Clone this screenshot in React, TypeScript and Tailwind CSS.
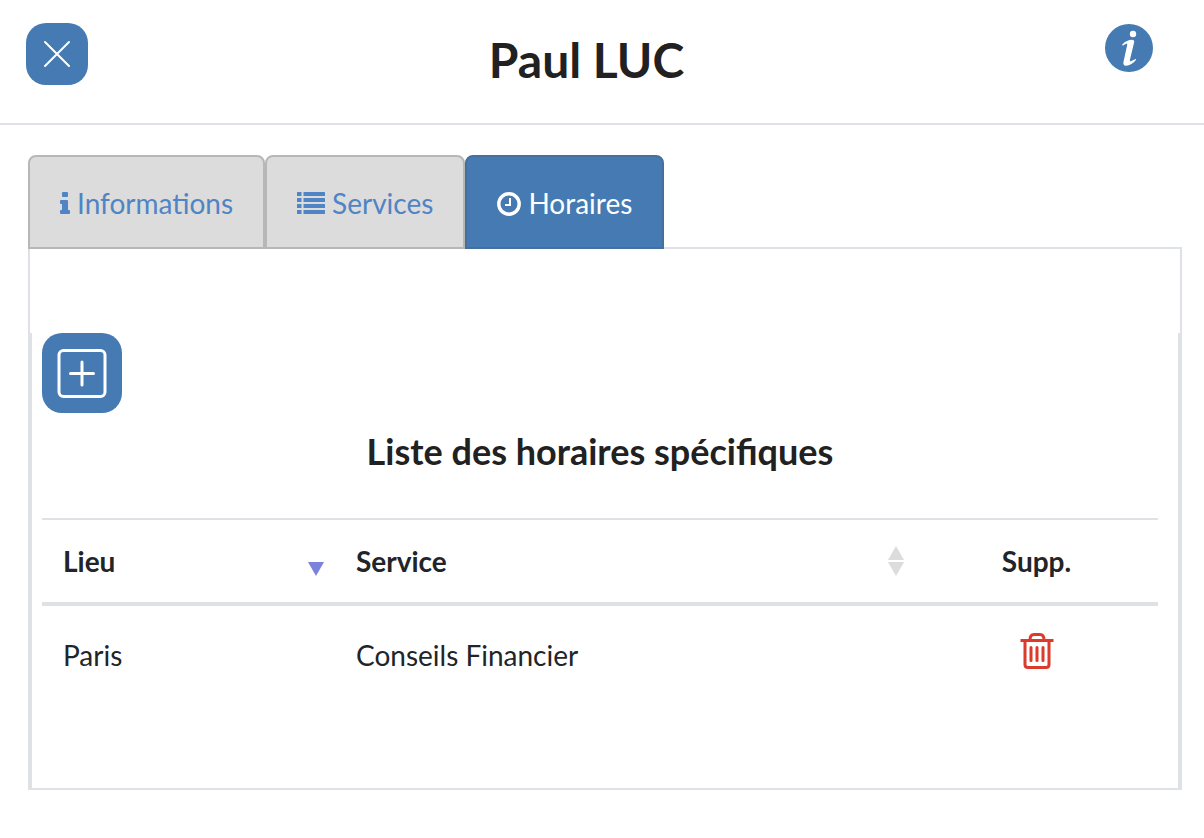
import { useState } from "react";
import type { ReactNode } from "react";

type TabId = "informations" | "services" | "horaires";

interface Horaire {
  id: number;
  lieu: string;
  service: string;
}

const horairesInit: Horaire[] = [{ id: 1, lieu: "Paris", service: "Conseils Financier" }];

function CloseIcon() {
  return (
    <svg className="h-7 w-7" viewBox="0 0 28 28" fill="none" stroke="currentColor" strokeWidth={2} strokeLinecap="round" aria-hidden="true">
      <path d="M2 2l24 24M26 2L2 26" />
    </svg>
  );
}

function HelpIcon() {
  return (
    <svg className="h-[50px] w-12" viewBox="0 0 48 48" aria-hidden="true">
      <circle cx="24" cy="24" r="24" fill="#457ab2" />
      <circle cx="28" cy="10" r="3.2" fill="white" />
      <path
        d="M17.3 20.6C20.5 17 24.5 15.6 27.7 15.9C29.4 16 29.4 17.3 29.1 18.5L25 35.4C24.7 37.1 25.1 37.5 26.2 37L30.2 35.2C31.1 34.9 31.4 35.4 30.9 36C28.5 39.2 24.5 41.6 21.2 41.8C18.6 41.9 18 39.9 18.5 37.8L22.2 21.1C22.4 19.7 21.9 19.3 20.6 19.9L18.1 21.5C17.3 21.7 16.9 21.2 17.3 20.6Z"
        fill="white"
      />
    </svg>
  );
}

function InfoIcon() {
  return (
    <svg className="h-6 w-[10px]" viewBox="0 0 10 24" fill="currentColor" aria-hidden="true">
      <rect x="2" y="0" width="6" height="5" rx="1" />
      <path d="M1 8h6q1 0 1 1v9h1q1 0 1 1v2q0 1-1 1H1q-1 0-1-1v-2q0-1 1-1h1v-6H1q-1 0-1-1V9q0-1 1-1z" />
    </svg>
  );
}

function ListIcon() {
  return (
    <svg className="h-6 w-7" viewBox="0 0 28 24" fill="currentColor" aria-hidden="true">
      {[0, 6, 12, 18].map((y) => (
        <g key={y}>
          <rect x="0" y={y} width="4.5" height="4" rx="0.5" />
          <rect x="6.5" y={y} width="21.5" height="4" rx="0.5" />
        </g>
      ))}
    </svg>
  );
}

function ClockIcon() {
  return (
    <svg className="h-6 w-6" viewBox="0 0 24 24" fill="none" stroke="currentColor" aria-hidden="true">
      <circle cx="12" cy="12" r="10.2" strokeWidth={3.4} />
      <path d="M13 6v7H8" strokeWidth={2} />
    </svg>
  );
}

function AddIcon() {
  return (
    <svg className="h-[50px] w-[50px]" viewBox="0 0 50 50" fill="none" stroke="white" strokeWidth={3} strokeLinecap="round" aria-hidden="true">
      <rect x="2" y="2.5" width="46" height="46" rx="4.5" />
      <path d="M25 14v23M13.5 25.5h23" />
    </svg>
  );
}

function TrashIcon() {
  return (
    <svg className="h-9 w-[34px]" viewBox="0 0 34 36" fill="none" stroke="currentColor" strokeWidth={3} aria-hidden="true">
      <path d="M0.5 7.5h33" />
      <path d="M10 7C10 3 11.5 1.5 14 1.5h6c2.5 0 4 1.5 4 5.5" />
      <path d="M5 8v23.5Q5 34.5 8 34.5h18q3 0 3-3V8" />
      <path d="M11 14.5v13M17 14.5v13M23 14.5v13" strokeLinecap="round" />
    </svg>
  );
}

function SortIcon({ active, descending }: { active: boolean; descending: boolean }) {
  return (
    <svg className="h-8 w-[18px]" viewBox="0 0 18 32" fill={active ? "#7b82dc" : "#dcdcdc"} aria-hidden="true">
      {(!active || descending) && <path d="M9 1l8 14H1z" />}
      {(!active || !descending) && <path d="M1 17h16L9 31z" />}
    </svg>
  );
}

const tabs: { id: TabId; label: string; icon: ReactNode }[] = [
  { id: "informations", label: "Informations", icon: <InfoIcon /> },
  { id: "services", label: "Services", icon: <ListIcon /> },
  { id: "horaires", label: "Horaires", icon: <ClockIcon /> },
];

export default function App() {
  const [tab, setTab] = useState<TabId>("horaires");
  const [horaires, setHoraires] = useState(horairesInit);
  const [sortKey, setSortKey] = useState<"lieu" | "service">("lieu");
  const [descending, setDescending] = useState(false);

  const handleSort = (key: "lieu" | "service") => {
    setDescending(key === sortKey ? !descending : false);
    setSortKey(key);
  };

  const rows = [...horaires].sort(
    (a, b) => a[sortKey].localeCompare(b[sortKey]) * (descending ? -1 : 1)
  );

  return (
    <div className="min-h-screen bg-white font-['Lato',sans-serif] text-[28px] leading-10 text-[#212529]">
      <header className="flex items-start border-b-2 border-[#dee2e6] pt-[23px] pr-[51px] pb-[38px] pl-[26px]">
        <button type="button" aria-label="Fermer" className="flex h-[62px] w-[62px] items-center justify-center rounded-[20px] bg-[#457ab2] text-white">
          <CloseIcon />
        </button>
        <h1 className="flex-1 pt-3 text-center text-[48px] leading-[50px] font-bold text-[#212121]">Paul LUC</h1>
        <button type="button" aria-label="Aide" className="ml-5">
          <HelpIcon />
        </button>
      </header>

      <main className="pt-[30px] pr-[22px] pb-12 pl-7">
        <div role="tablist" className="relative -mb-[2px] flex">
          {tabs.map((t) => (
            <button
              key={t.id}
              id={`tab-${t.id}`}
              type="button"
              role="tab"
              aria-selected={tab === t.id}
              aria-controls="panel"
              onClick={() => setTab(t.id)}
              className={`flex h-[94px] items-center gap-[7px] rounded-t-lg border-2 px-[30px] pt-1 ${
                tab === t.id
                  ? "border-[#456f9c] bg-[#457ab2] text-white"
                  : "border-[#b7b7b7] bg-[#dcdcdc] text-[#5084c4]"
              }`}
            >
              {t.icon}
              <span className="pb-[2px]">{t.label}</span>
            </button>
          ))}
        </div>

        <section id="panel" role="tabpanel" aria-labelledby={`tab-${tab}`} className="border-2 border-[#dee2e6] pt-[84px]">
          {tab === "horaires" && (
            <div className="border-x-2 border-[#dee2e6] pr-5 pb-[84px] pl-[10px]">
              <button type="button" aria-label="Ajouter un horaire" className="flex h-20 w-20 items-center justify-center rounded-[20px] bg-[#457ab2]">
                <AddIcon />
              </button>
              <h2 className="pt-4 pb-[45px] text-center text-[36px] leading-[44px] font-bold text-[#212121]">
                Liste des horaires spécifiques
              </h2>

              <table className="w-full table-fixed border-separate border-spacing-0 text-left">
                <colgroup>
                  <col className="w-[293px]" />
                  <col />
                  <col className="w-[243px]" />
                </colgroup>
                <thead>
                  <tr>
                    {(["lieu", "service"] as const).map((key) => (
                      <th
                        key={key}
                        aria-sort={sortKey === key ? (descending ? "descending" : "ascending") : "none"}
                        className="border-t-2 border-b-4 border-[#dee2e6] py-[21px] pr-[10px] pl-[21px] font-bold"
                      >
                        <button type="button" onClick={() => handleSort(key)} className="flex w-full items-center justify-between">
                          <span>{key === "lieu" ? "Lieu" : "Service"}</span>
                          <SortIcon active={sortKey === key} descending={descending} />
                        </button>
                      </th>
                    ))}
                    <th className="border-t-2 border-b-4 border-[#dee2e6] py-[21px] text-center font-bold">Supp.</th>
                  </tr>
                </thead>
                <tbody>
                  {rows.map((h) => (
                    <tr key={h.id}>
                      <td className="py-[29px] pl-[21px]">{h.lieu}</td>
                      <td className="py-[29px] pl-[21px]">{h.service}</td>
                      <td className="pb-2">
                        <button
                          type="button"
                          aria-label={`Supprimer ${h.service}`}
                          className="mx-auto block text-[#dc3a2b]"
                          onClick={() => setHoraires(horaires.filter((x) => x.id !== h.id))}
                        >
                          <TrashIcon />
                        </button>
                      </td>
                    </tr>
                  ))}
                </tbody>
              </table>
            </div>
          )}
        </section>
      </main>
    </div>
  );
}
